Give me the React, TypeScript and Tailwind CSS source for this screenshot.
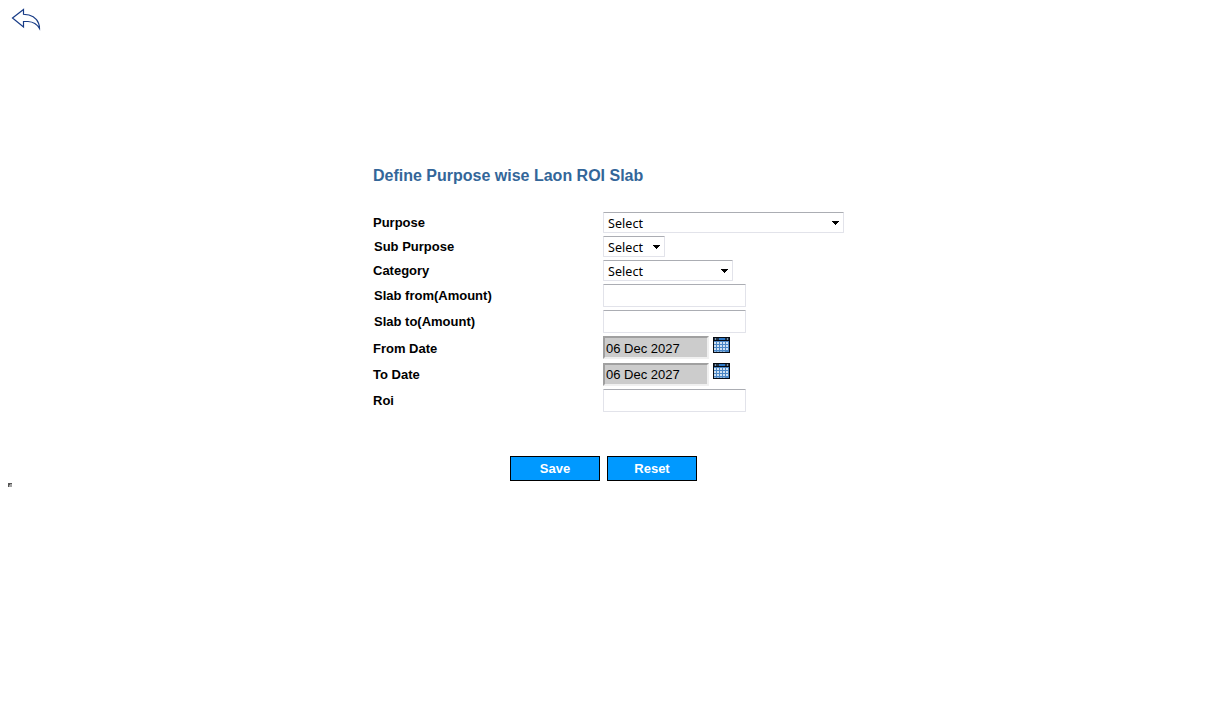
import React from "react";

const labelClass = "w-[230px] shrink-0 text-[13px] leading-[15px] font-bold whitespace-nowrap";

function Row({ label, height, shift = "", children }: { label: string; height: string; shift?: string; children: React.ReactNode }) {
  return (
    <div className={`flex items-start ${height}`}>
      <label className={`${labelClass} pt-[3px] ${shift}`}>{label}</label>
      {children}
    </div>
  );
}

function Select({ width }: { width: string }) {
  return (
    <div className={`flex h-[21px] items-center justify-between rounded-[1px] border border-[#e2e3ea] border-t-[#abadb3] pr-[4px] pl-[4px] ${width}`}>
      <span className="pt-[2px] font-['Noto_Sans',sans-serif] text-[12.5px] leading-[18px] tracking-[0.05px]">Select</span>
      <svg width="7" height="4" viewBox="0 0 7 4" shapeRendering="crispEdges">
        <path d="M0 0h7v1H6v1H5v1H4v1H3V3H2V2H1V1H0z" fill="#000" />
      </svg>
    </div>
  );
}

function TextInput({ name }: { name: string }) {
  return <input aria-label={name} className="h-[23px] w-[143px] rounded-[1px] border border-[#e2e3ea] border-t-[#abadb3] px-1 text-[13px] outline-none" />;
}

function Calendar() {
  const columns = [1, 4, 7, 10, 13];
  const rows = [5, 8, 11];
  return (
    <svg width="17" height="16" viewBox="0 0 17 16" shapeRendering="crispEdges">
      <path d="M0 0h17v16H0z" fill="#070b12" />
      <path d="M1 1h15v2H1z" fill="#203347" />
      <path d="M6 1h6v2H6z" fill="#2d79c8" />
      <path d="M2 1h1v2H2zM14 1h1v2h-1z" fill="#8193a5" />
      <path d="M1 4h15v11H1z" fill="#4a86c5" />
      {rows.map((y) => columns.map((x) => <path key={`${x}-${y}`} d={`M${x} ${y}h2v2h-2z`} fill="#cfe1f2" />))}
      <path d="M1 14h2v1H1zM4 14h2v1H4zM7 14h2v1H7zM10 14h2v1h-2z" fill="#8db5dc" />
    </svg>
  );
}

function DateField({ name, text, icon }: { name: string; text: string; icon: string }) {
  return (
    <div className="flex items-start gap-[4px]">
      <input
        aria-label={name}
        readOnly
        value="06 Dec 2027"
        className={`h-[23px] w-[106px] border-2 border-t-[#a0a0a0] border-r-[#f0f0f0] border-b-[#f0f0f0] border-l-[#a0a0a0] bg-[#cccccc] px-[1px] text-[13px] leading-[15px] text-black outline-none ${text}`}
      />
      <span className={icon}><Calendar /></span>
    </div>
  );
}

const buttonClass = "h-[25px] w-[90px] border border-black bg-[#0099ff] text-[13px] leading-[15px] font-bold text-white";

export default function App() {
  return (
    <main className="h-[723px] w-full overflow-hidden bg-white font-['Liberation_Sans',Arial,sans-serif] text-black">
      <header className="h-[167px] pt-[8px] pl-[11px]">
        <svg width="31" height="23" viewBox="0 0 31 23" fill="none" stroke="#173b86" strokeWidth="1.2">
          <path d="M1.5 10 12.5 1.5V6.3L18 7C24 8.500 28.500 13.500 28.500 20.500C26 16 22 13.800 17 13.500H12.500V19Z" />
        </svg>
      </header>
      <form className="ml-[373px] w-[480px]" onSubmit={(event) => event.preventDefault()}>
        <h1 className="h-[45px] text-[16px] leading-[18px] font-bold text-[#336699]">Define Purpose wise Laon ROI Slab</h1>
        <Row label="Purpose" height="h-[24px]"><Select width="w-[241px]" /></Row>
        <Row label="Sub Purpose" height="h-[24px]" shift="pl-px"><Select width="w-[62px]" /></Row>
        <Row label="Category" height="h-[24px]"><Select width="w-[130px]" /></Row>
        <Row label="Slab from(Amount)" height="h-[26px]" shift="pl-px mt-px"><TextInput name="Slab from amount" /></Row>
        <Row label="Slab to(Amount)" height="h-[26px]" shift="pl-px mt-px"><TextInput name="Slab to amount" /></Row>
        <Row label="From Date" height="h-[27px]" shift="mt-[2px]"><DateField name="From date" text="pt-[2px]" icon="pt-px" /></Row>
        <Row label="To Date" height="h-[26px]" shift="mt-px"><DateField name="To date" text="pt-0" icon="pt-0" /></Row>
        <Row label="Roi" height="h-[67px]" shift="mt-px"><TextInput name="Roi" /></Row>
        <div className="ml-[137px] flex gap-[7px]">
          <button type="submit" className={buttonClass}>Save</button>
          <button type="reset" className={buttonClass}>Reset</button>
        </div>
      </form>
      <footer className="pt-[2px] pl-[8px]">
        <svg width="4" height="4" viewBox="0 0 4 4" shapeRendering="crispEdges">
          <path d="M0 0h4v4H0z" fill="#a5a5a5" />
          <path d="M0 0h4v1H2v1H1v2H0z" fill="#555" />
        </svg>
      </footer>
    </main>
  );
}
